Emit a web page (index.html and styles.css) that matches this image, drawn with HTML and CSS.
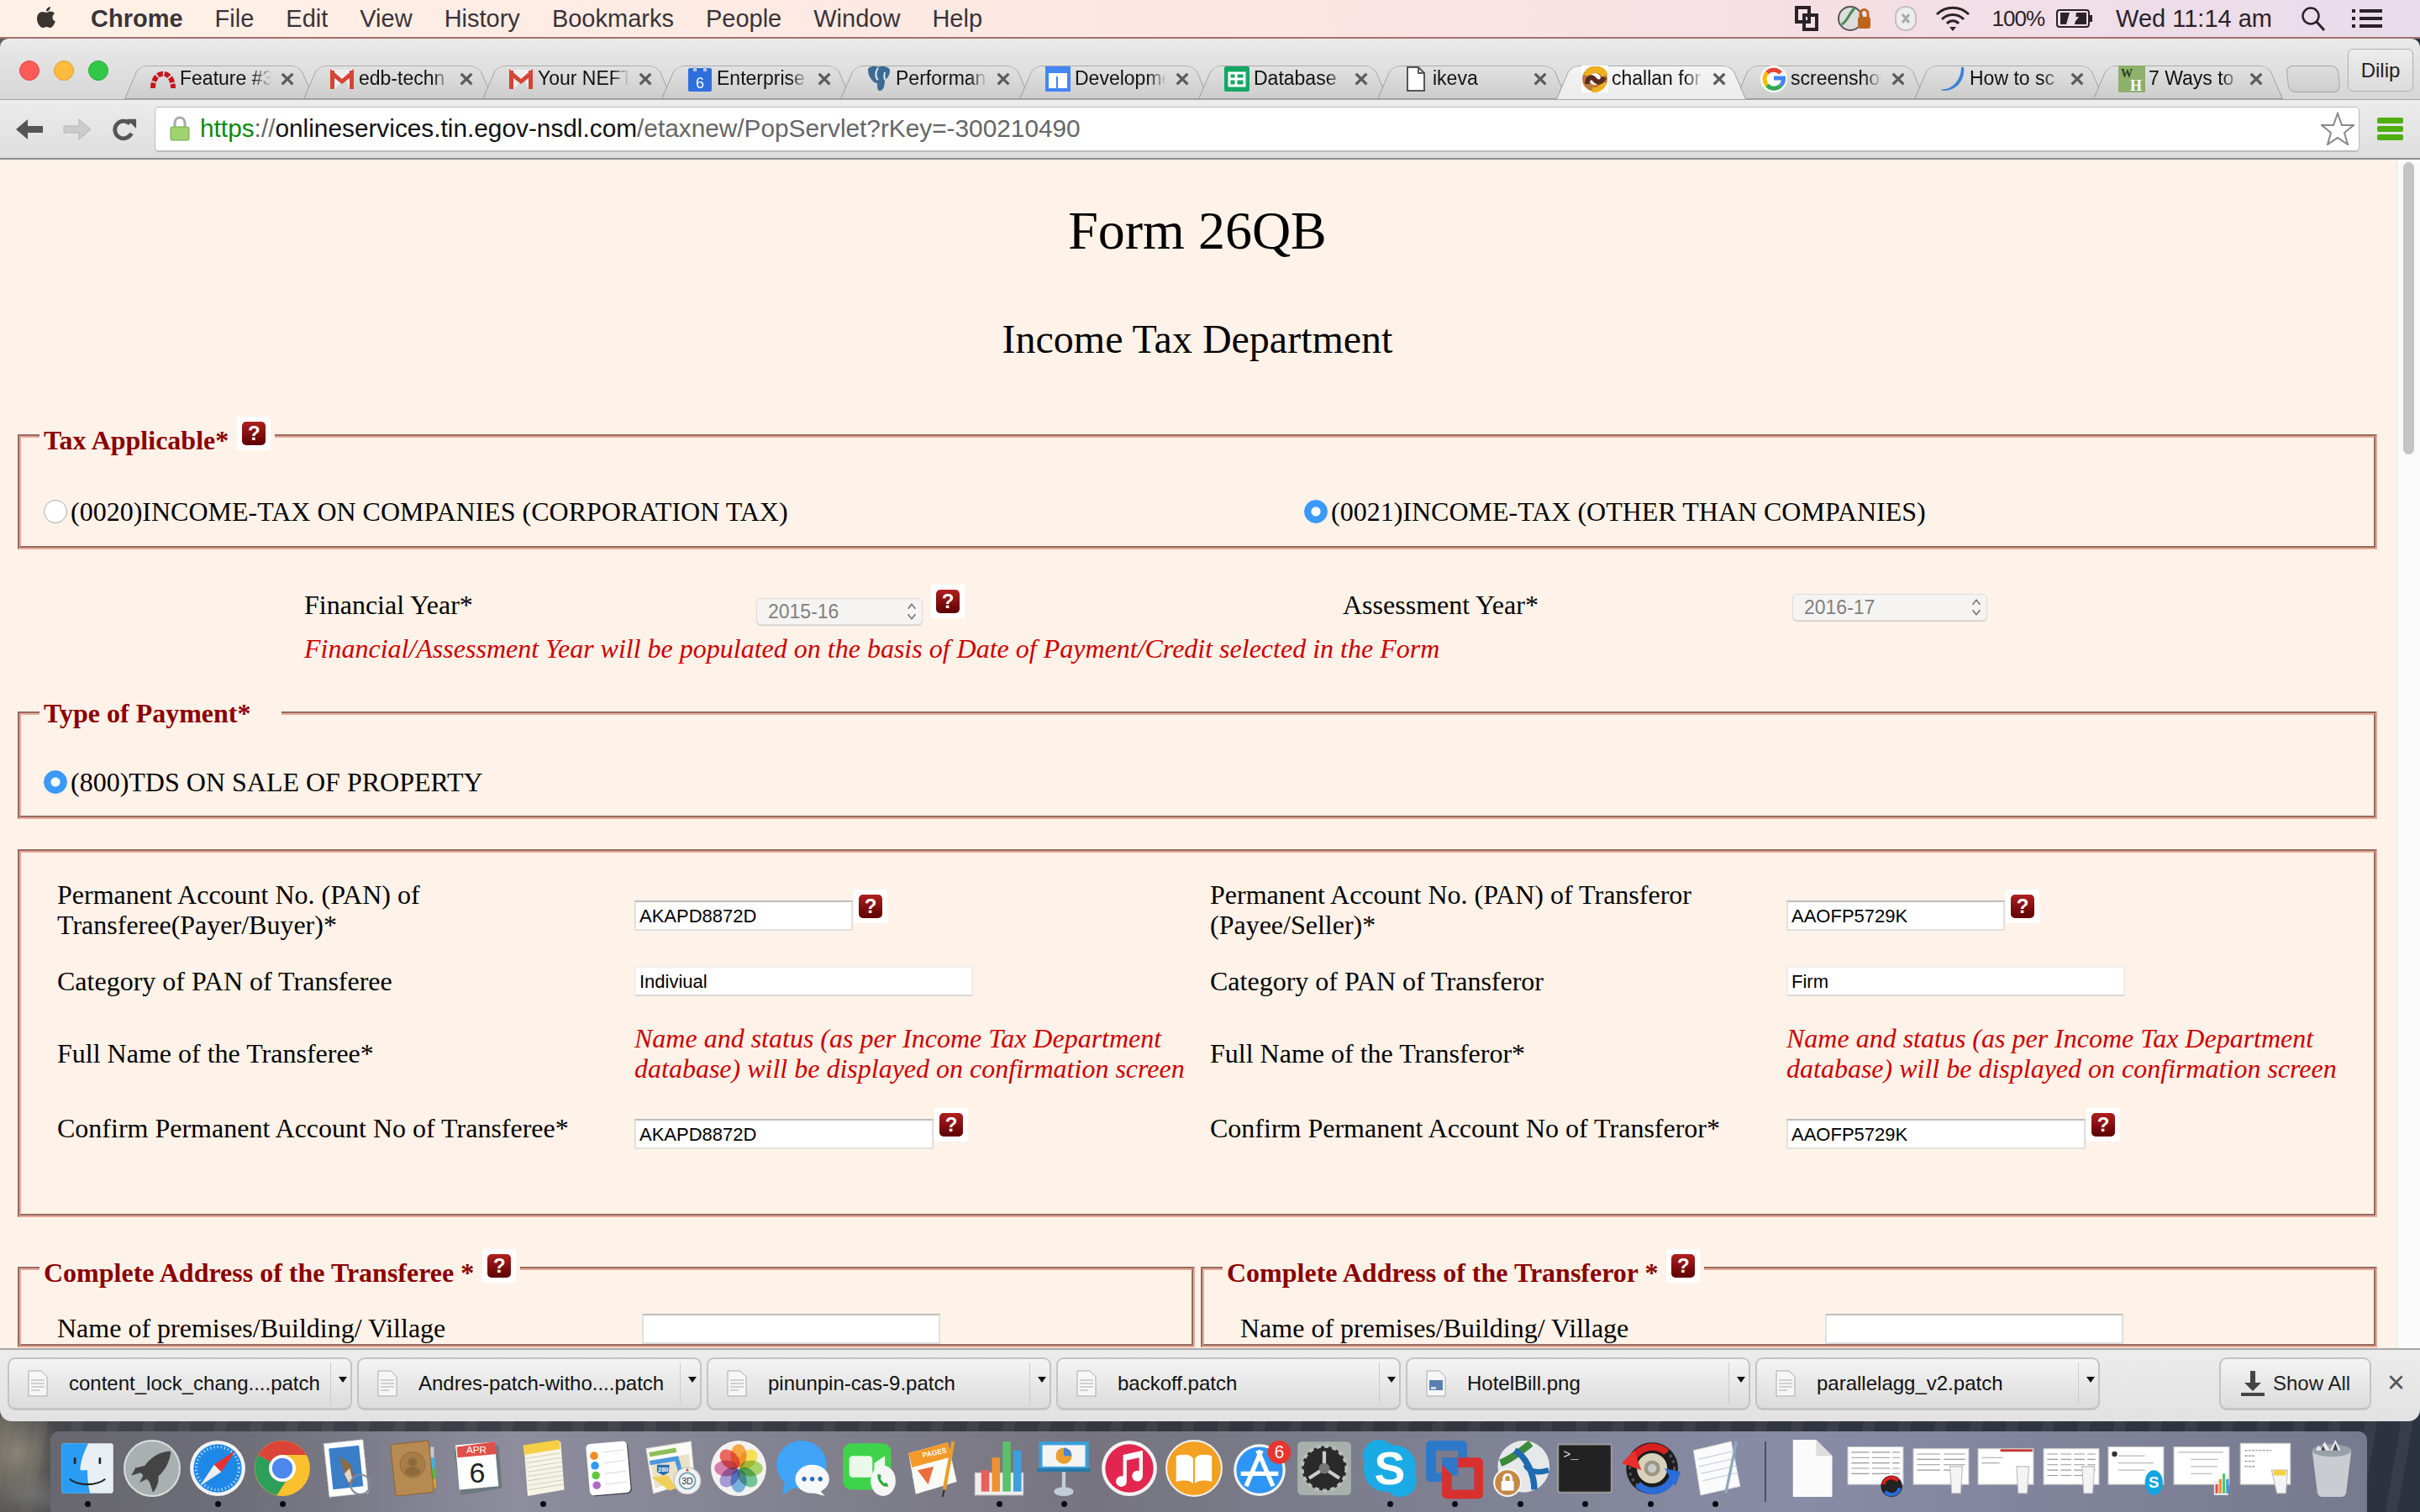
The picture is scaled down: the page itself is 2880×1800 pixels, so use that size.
FILE: index.html
```html
<!doctype html>
<html>
  <head>
    <meta charset="UTF-8" />
    <title>Form 26QB</title>
    <link rel="stylesheet" href="styles.css">
  </head>
  <body>
    <header class="menubar">
      <svg class="apple" viewBox="0 0 24 30"><path fill="#3a3330" d="M17 1c.2 3-2.600 5.600-5 5.400C11.700 3.600 14.400 1.200 17 1zM12 8c1.200 0 2.800-1.400 5-1.400 1.600 0 3.700.7 5 2.700-3.800 2.400-3.100 7.700.9 9.300-1 2.700-3.400 7.400-6 7.400-1.700 0-2.400-1.100-4.500-1.100s-2.900 1.100-4.500 1.100C4.800 26 1 20.500 1 15.300 1 10 4.300 7 7.500 7 9.500 7 10.900 8 12 8z"/></svg>
      <span class="menu-app">Chrome</span>
      <span>File</span><span>Edit</span><span>View</span><span>History</span><span>Bookmarks</span><span>People</span><span>Window</span><span>Help</span>
      <div class="menu-right">
        <svg class="m-vm" viewBox="0 0 28 30"><path fill="none" stroke="#2a2228" stroke-width="4" d="M2 2h15v17H2zM11 11h15v17H11z"/></svg>
        <svg class="m-cisco" viewBox="0 0 42 30"><circle cx="15" cy="15" r="14" fill="#ddd" stroke="#555" stroke-width="2"/><path fill="none" stroke="#4a8a50" stroke-width="3" d="M5 22C12 18 14 8 20 3"/><rect x="24" y="13" width="15" height="14" rx="3" fill="#c0641a"/><path fill="none" stroke="#c0641a" stroke-width="3" d="M27 14V9a4.500 4.500 0 0 1 9 0v5"/></svg>
        <svg class="m-skype" viewBox="0 0 30 30"><rect x="3" y="1" width="24" height="28" rx="11" fill="#eee" stroke="#c6c0c4" stroke-width="2"/><path stroke="#aaa" stroke-width="3" d="M11 10l8 10M19 10l-8 10"/></svg>
        <svg class="m-wifi" viewBox="0 0 42 30"><g fill="none" stroke="#2a2228" stroke-width="3"><path d="M2 10a27 27 0 0 1 38 0M8 16a18 18 0 0 1 26 0M14 21a9 9 0 0 1 14 0"/></g><path fill="#2a2228" d="M17 25h8l-4 5z"/></svg>
        <span class="m-pct">100%</span>
        <svg class="m-batt" viewBox="0 0 44 22"><rect x="1" y="1" width="38" height="20" rx="3" fill="none" stroke="#2a2228" stroke-width="2"/><rect x="40" y="7" width="3" height="8" fill="#2a2228"/><path fill="#2a2228" d="M5 4h11l-4 14H5zM24 4h12v14H22z"/><path fill="#e8dcea" d="M24 2l-8 11h5l-3 8 9-12h-5z"/></svg>
        <span class="m-clock">Wed 11:14 am</span>
        <svg class="m-search" viewBox="0 0 30 30"><circle cx="12" cy="12" r="9.500" fill="none" stroke="#2a2228" stroke-width="2.500"/><path stroke="#2a2228" stroke-width="3" d="M19 19l9 10"/></svg>
        <svg class="m-list" viewBox="0 0 36 24"><path stroke="#2a2228" stroke-width="4" d="M0 3h4M9 3h27M0 12h4M9 12h27M0 21h4M9 21h27"/></svg>
      </div>
    </header>

    <div class="browser">
      <div class="tabstrip">
        <div class="lights"><i class="red"></i><i class="yellow"></i><i class="green"></i></div>
        <div class="tabs">
          <div class="tab">
            <svg class="fav" viewBox="0 0 32 32"><path fill="none" stroke="#c8141c" stroke-width="6" stroke-dasharray="6.500 1.800" d="M4 27C4 4 28 4 28 27"/></svg>
            <span class="tab-title">Feature #3</span><span class="tab-x">×</span>
          </div>
          <div class="tab">
            <svg class="fav" viewBox="0 0 32 32"><path fill="#eee" d="M3 5h26v23H3z"/><path fill="#d6d6d6" d="M7 28L20 15l5 13z"/><path fill="#d64434" d="M2 6h5v22H2zM25 6h5v22h-5z"/><path fill="#d64434" d="M2 4l14 12L30 4v7L16 22 2 11z"/></svg>
            <span class="tab-title">edb-techn</span><span class="tab-x">×</span>
          </div>
          <div class="tab">
            <svg class="fav" viewBox="0 0 32 32"><path fill="#eee" d="M3 5h26v23H3z"/><path fill="#d6d6d6" d="M7 28L20 15l5 13z"/><path fill="#d64434" d="M2 6h5v22H2zM25 6h5v22h-5z"/><path fill="#d64434" d="M2 4l14 12L30 4v7L16 22 2 11z"/></svg>
            <span class="tab-title">Your NEFT</span><span class="tab-x">×</span>
          </div>
          <div class="tab">
            <svg class="fav" viewBox="0 0 32 32"><rect x="2" y="3" width="28" height="28" rx="2" fill="#2f6fdc"/><path fill="#b9c6da" d="M8 0h4v7H8zM20 0h4v7h-4z"/><text x="16" y="27" text-anchor="middle" class="fav-num">6</text></svg>
            <span class="tab-title">Enterprise</span><span class="tab-x">×</span>
          </div>
          <div class="tab">
            <svg class="fav" viewBox="0 0 32 32"><path fill="#3b6a94" d="M3 5c0-4 8-5 12-3 4-2 14-1 14 4 0 5-3 10-6 11 0 5-1 13-6 13-3 0-3-5-3-9-5 0-11-8-11-16z"/><path stroke="#dfe8f0" stroke-width="2" fill="none" d="M15 3c-4 5-3 12 0 14M23 8c-1 3-1 6 0 9"/></svg>
            <span class="tab-title">Performan</span><span class="tab-x">×</span>
          </div>
          <div class="tab">
            <svg class="fav" viewBox="0 0 32 32"><rect x="1" y="1" width="30" height="30" fill="#4285f4"/><path fill="#fff" d="M5 9h22v18H16V13h-2v14H5z"/></svg>
            <span class="tab-title">Developme</span><span class="tab-x">×</span>
          </div>
          <div class="tab">
            <svg class="fav" viewBox="0 0 32 32"><rect x="1" y="1" width="30" height="30" rx="2" fill="#16a765"/><path fill="none" stroke="#fff" stroke-width="3" d="M7 9h18v15H7zM7 16h18M15 9v15"/></svg>
            <span class="tab-title">Database</span><span class="tab-x">×</span>
          </div>
          <div class="tab">
            <svg class="fav" viewBox="0 0 32 32"><path fill="#fff" stroke="#555" stroke-width="2" d="M6 2h13l7 7v21H6z"/><path fill="none" stroke="#555" stroke-width="2" d="M19 2v7h7"/></svg>
            <span class="tab-title">ikeva</span><span class="tab-x">×</span>
          </div>
          <div class="tab tab-active">
            <svg class="fav" viewBox="0 0 32 32"><rect width="32" height="32" fill="#fff"/><circle cx="16" cy="16" r="11" fill="none" stroke="#c07a38" stroke-width="8"/><path fill="none" stroke="#eeb020" stroke-width="8" d="M6 12C10 3 24 2 28 12"/><path fill="none" stroke="#eeb020" stroke-width="6" d="M13 29c6 1 12-2 14-9"/><path fill="none" stroke="#5a2c20" stroke-width="6" d="M7 22C7 14 12 12 16 17s9 2 11-3"/></svg>
            <span class="tab-title">challan for</span><span class="tab-x">×</span>
          </div>
          <div class="tab">
            <svg class="fav" viewBox="0 0 32 32"><circle cx="16" cy="16" r="16" fill="#fff"/><path fill="none" stroke-width="5" stroke="#ea4335" d="M24 9a11 11 0 0 0-16-.500"/><path fill="none" stroke-width="5" stroke="#fbbc05" d="M8 8.500a11 11 0 0 0 0 15"/><path fill="none" stroke-width="5" stroke="#34a853" d="M8 23.500a11 11 0 0 0 16 .500"/><path fill="none" stroke-width="5" stroke="#4285f4" d="M24 24a11 11 0 0 0 3.500-9H16"/></svg>
            <span class="tab-title">screenshot</span><span class="tab-x">×</span>
          </div>
          <div class="tab">
            <svg class="fav" viewBox="0 0 32 32"><path fill="#3c82d4" d="M26 2h3c2 14-8 28-23 28 0 0-3 0-4-2 12 2 24-10 24-26z"/></svg>
            <span class="tab-title">How to sc</span><span class="tab-x">×</span>
          </div>
          <div class="tab">
            <svg class="fav" viewBox="0 0 32 32"><rect width="32" height="32" fill="#8db06a"/><text x="3" y="14" class="fav-wh wh-dark">W</text><text x="14" y="30" class="fav-wh">H</text></svg>
            <span class="tab-title">7 Ways to</span><span class="tab-x">×</span>
          </div>
        </div>
        <div class="newtab"></div>
        <div class="profile">Dilip</div>
      </div>

      <div class="toolbar">
        <svg class="tb-back" viewBox="0 0 34 28"><path fill="#555" d="M15 2L1 14l14 12v-8h18v-8H15z"/></svg>
        <svg class="tb-fwd" viewBox="0 0 34 28"><path fill="#ccc" stroke="#b4b4b4" d="M19 2l14 12-14 12v-8H1v-8h18z"/></svg>
        <svg class="tb-reload" viewBox="0 0 32 30"><path fill="none" stroke="#555" stroke-width="5" d="M25 20a11 11 0 1 1-2-12"/><path fill="#555" d="M19 2h12v12z"/></svg>
        <div class="omnibox">
          <svg class="lock" viewBox="0 0 26 30"><path fill="none" stroke="#aaa" stroke-width="3" d="M7 13V8a6 6 0 0 1 12 0v5"/><rect x="2" y="13" width="22" height="16" rx="2" fill="#9fd36f" stroke="#75a84a"/></svg>
          <div class="url"><span class="url-https">https</span><span class="url-dim">://</span>onlineservices.tin.egov-nsdl.com<span class="url-dim">/etaxnew/PopServlet?rKey=-300210490</span></div>
          <svg class="star" viewBox="0 0 40 40"><path fill="#fff" stroke="#888" stroke-width="2" d="M20 2l5 14h14l-11 9 4 14-12-8-12 8 4-14L1 16h14z"/></svg>
        </div>
        <div class="hamburger"><i></i><i></i><i></i></div>
      </div>

      <div class="viewport">
        <main class="page">
          <h1>Form 26QB</h1>
          <h2>Income Tax Department</h2>

          <fieldset class="box tax-box">
            <legend><span>Tax Applicable*</span><span class="help"><b>?</b></span></legend>
            <div class="radio-row">
              <label class="radio"><input type="radio" name="tax">(0020)INCOME-TAX ON COMPANIES (CORPORATION TAX)</label>
              <label class="radio"><input type="radio" name="tax" checked>(0021)INCOME-TAX (OTHER THAN COMPANIES)</label>
            </div>
          </fieldset>

          <div class="year-row">
            <span class="year-label">Financial Year*</span>
            <div class="year-field">
              <div class="year-select">2015-16<svg viewBox="0 0 12 20"><path fill="none" stroke="#777" stroke-width="1.500" d="M2 7l4-5 4 5M2 13l4 5 4-5"/></svg></div>
              <span class="help"><b>?</b></span>
            </div>
            <span class="year-label">Assessment Year*</span>
            <div class="year-field">
              <div class="year-select year-select-wide">2016-17<svg viewBox="0 0 12 20"><path fill="none" stroke="#777" stroke-width="1.500" d="M2 7l4-5 4 5M2 13l4 5 4-5"/></svg></div>
            </div>
          </div>
          <p class="note year-note">Financial/Assessment Year will be populated on the basis of Date of Payment/Credit selected in the Form</p>

          <fieldset class="box payment-box">
            <legend class="payment-legend"><span>Type of Payment*</span></legend>
            <div class="radio-row">
              <label class="radio"><input type="radio" name="payment" checked>(800)TDS ON SALE OF PROPERTY</label>
            </div>
          </fieldset>

          <fieldset class="box pan-box">
            <div class="pan-grid">
              <div>Permanent Account No. (PAN) of Transferee(Payer/Buyer)*</div>
              <div class="pan-field"><input class="txt txt-short" value="AKAPD8872D" readonly><span class="help"><b>?</b></span></div>
              <div class="col-right">Permanent Account No. (PAN) of Transferor (Payee/Seller)*</div>
              <div class="pan-field"><input class="txt txt-short" value="AAOFP5729K" readonly><span class="help"><b>?</b></span></div>

              <div>Category of PAN of Transferee</div>
              <div><input class="txt txt-wide" value="Indiviual" readonly></div>
              <div class="col-right">Category of PAN of Transferor</div>
              <div><input class="txt txt-wide" value="Firm" readonly></div>

              <div>Full Name of the Transferee*</div>
              <div class="note">Name and status (as per Income Tax Department database) will be displayed on confirmation screen</div>
              <div class="col-right">Full Name of the Transferor*</div>
              <div class="note">Name and status (as per Income Tax Department database) will be displayed on confirmation screen</div>

              <div>Confirm Permanent Account No of Transferee*</div>
              <div class="pan-field"><input class="txt txt-mid" value="AKAPD8872D" readonly><span class="help"><b>?</b></span></div>
              <div class="col-right">Confirm Permanent Account No of Transferor*</div>
              <div class="pan-field"><input class="txt txt-mid" value="AAOFP5729K" readonly><span class="help"><b>?</b></span></div>
            </div>
          </fieldset>

          <div class="address-row">
            <fieldset class="box address-box">
              <legend><span>Complete Address of the Transferee *</span><span class="help"><b>?</b></span></legend>
              <div class="address-line">
                <span>Name of premises/Building/ Village</span>
                <input class="txt txt-addr" readonly>
              </div>
            </fieldset>
            <fieldset class="box address-box">
              <legend><span>Complete Address of the Transferor *</span><span class="help"><b>?</b></span></legend>
              <div class="address-line">
                <span>Name of premises/Building/ Village</span>
                <input class="txt txt-addr" readonly>
              </div>
            </fieldset>
          </div>
        </main>
        <div class="scrollbar"><div class="thumb"></div></div>
      </div>

      <div class="shelf">
        <div class="dl">
          <svg class="dl-icon" viewBox="0 0 24 32"><path fill="#f6f6f6" stroke="#aaa" d="M1 1h15l7 7v23H1z"/><path stroke="#aaa" d="M4 12h16M4 16h16M4 20h16M4 24h10"/></svg>
          <span class="dl-name">content_lock_chang....patch</span><span class="dl-arrow"></span>
        </div>
        <div class="dl">
          <svg class="dl-icon" viewBox="0 0 24 32"><path fill="#f6f6f6" stroke="#aaa" d="M1 1h15l7 7v23H1z"/><path stroke="#aaa" d="M4 12h16M4 16h16M4 20h16M4 24h10"/></svg>
          <span class="dl-name">Andres-patch-witho....patch</span><span class="dl-arrow"></span>
        </div>
        <div class="dl">
          <svg class="dl-icon" viewBox="0 0 24 32"><path fill="#f6f6f6" stroke="#aaa" d="M1 1h15l7 7v23H1z"/><path stroke="#aaa" d="M4 12h16M4 16h16M4 20h16M4 24h10"/></svg>
          <span class="dl-name">pinunpin-cas-9.patch</span><span class="dl-arrow"></span>
        </div>
        <div class="dl">
          <svg class="dl-icon" viewBox="0 0 24 32"><path fill="#f6f6f6" stroke="#aaa" d="M1 1h15l7 7v23H1z"/><path stroke="#aaa" d="M4 12h16M4 16h16M4 20h16M4 24h10"/></svg>
          <span class="dl-name">backoff.patch</span><span class="dl-arrow"></span>
        </div>
        <div class="dl">
          <svg class="dl-icon" viewBox="0 0 24 32"><path fill="#f6f6f6" stroke="#aaa" d="M1 1h15l7 7v23H1z"/><rect x="4" y="12" width="16" height="12" fill="#5a7fb0"/><path fill="#ddd" d="M6 20h6v3H6z"/></svg>
          <span class="dl-name">HotelBill.png</span><span class="dl-arrow"></span>
        </div>
        <div class="dl">
          <svg class="dl-icon" viewBox="0 0 24 32"><path fill="#f6f6f6" stroke="#aaa" d="M1 1h15l7 7v23H1z"/><path stroke="#aaa" d="M4 12h16M4 16h16M4 20h16M4 24h10"/></svg>
          <span class="dl-name">parallelagg_v2.patch</span><span class="dl-arrow"></span>
        </div>
        <div class="showall">
          <svg viewBox="0 0 28 30"><path fill="#444" d="M11 0h6v14h7L14 24 4 14h7zM0 26h28v4H0z"/></svg>Show All
        </div>
        <span class="shelf-x">×</span>
      </div>
    </div>

    <nav class="dock">
      <div class="dock-app running"><svg viewBox="0 0 64 64"><rect x="3" y="4" width="58" height="56" rx="3" fill="#e8f0f6"/><path fill="#2a9cf4" d="M6 4h27c-6 12-9 22-9 30h8c0 9 1 18 3 26H6a3 3 0 0 1-3-3V7a3 3 0 0 1 3-3z"/><path fill="none" stroke="#222" stroke-width="2" d="M12 44c10 8 30 8 40 0"/><path stroke="#222" stroke-width="2.500" d="M18 20v7M46 20v7"/></svg></div>
      <div class="dock-app"><svg viewBox="0 0 64 64"><circle cx="32" cy="32" r="31" fill="#a9b0b0" stroke="#d8dcdc" stroke-width="2"/><path fill="#444" d="M50 13C40 14 30 20 24 29l-12 3c3-1-3 6-3 8l10-3 3 3-4 8 8-4 3 3 4 12c3-3 7-11 6-18 8-7 13-17 14-28z"/></svg></div>
      <div class="dock-app running"><svg viewBox="0 0 64 64"><circle cx="32" cy="32" r="31" fill="#f4f4f4"/><circle cx="32" cy="32" r="27" fill="#1e88e8"/><circle cx="32" cy="32" r="24" fill="none" stroke="#d8ecff" stroke-width="3" stroke-dasharray="1 3"/><path fill="#e8302c" d="M52 12L36 36l-8-8z"/><path fill="#eee" d="M12 52l16-24 8 8z"/></svg></div>
      <div class="dock-app running"><svg viewBox="0 0 64 64"><circle cx="32" cy="32" r="31" fill="#fbc02d"/><path fill="#2e9e5b" d="M32 32L5 17A31 31 0 0 0 26 62L40 40z"/><path fill="#db4437" d="M32 32L5 17A31 31 0 0 1 59 17H32z"/><circle cx="32" cy="32" r="15" fill="#fff"/><circle cx="32" cy="32" r="11.500" fill="#4d86ec"/></svg></div>
      <div class="dock-app"><svg viewBox="0 0 64 64"><rect x="8" y="2" width="44" height="60" fill="#fff" stroke="#ccc" stroke-dasharray="3 2" transform="rotate(-6 30 32)"/><rect x="13" y="8" width="34" height="46" fill="#3a7ec8" transform="rotate(-6 30 32)"/><path fill="#8a6a48" d="M22 18l14 10 3 18-6 4-6-16z"/><path fill="#e4d8c0" d="M28 38l6-6 3 12-4 4z"/><circle cx="46" cy="50" r="11" fill="none" stroke="#889" stroke-width="2"/></svg></div>
      <div class="dock-app"><svg viewBox="0 0 64 64"><path fill="#c6c8cc" d="M52 8h4v12h-4z"/><path fill="#40b4dc" d="M52 20h5v12h-5z"/><path fill="#55b84e" d="M53 32h5v12h-5z"/><path fill="#e2a22a" d="M54 44h4v10h-4z"/><rect x="10" y="3" width="43" height="58" rx="3" fill="#b68a52" stroke="#8c6636" transform="rotate(-6 32 32)"/><circle cx="32" cy="28" r="14" fill="#a87c46" stroke="#96703e"/><circle cx="32" cy="25" r="5" fill="#8e6a3a"/><path fill="#8e6a3a" d="M23 37c1-9 17-9 18 0a14 14 0 0 1-18 0z"/></svg></div>
      <div class="dock-app"><svg viewBox="0 0 64 64"><path fill="#6c7a80" d="M5 12l50-6 4 48-46 8z"/><rect x="9" y="4" width="44" height="50" fill="#fff" transform="rotate(-5 32 32)"/><path fill="#e0504a" d="M8 8l43-6 2 14-44 4z"/><text x="30" y="15" class="cal-mon" text-anchor="middle">APR</text><text x="31" y="48" class="cal-day" text-anchor="middle">6</text></svg></div>
      <div class="dock-app running"><svg viewBox="0 0 64 64"><path fill="#f6f4e4" d="M11 9l41-7 4 54-41 7z"/><path fill="#f6d044" d="M10 6L50 0l2 10-41 7z"/><path stroke="#d2d0c0" d="M13 21l38-6M14 26l38-6M14 31l39-6M15 36l38-6M15 41l39-6M15 46l39-6M16 51l39-6M16 56l39-6"/></svg></div>
      <div class="dock-app"><svg viewBox="0 0 64 64"><rect x="9" y="3" width="46" height="58" rx="5" fill="#333" transform="rotate(-5 32 32) translate(1 1)"/><rect x="9" y="3" width="46" height="58" rx="5" fill="#fff" transform="rotate(-5 32 32)"/><circle cx="16" cy="18" r="4.500" fill="#f08a24"/><circle cx="17" cy="29" r="4.500" fill="#2f9cf0"/><circle cx="18" cy="40" r="4.500" fill="#5cc83c"/><circle cx="19" cy="51" r="4.500" fill="#b46ac4"/><path stroke="#ddd" d="M26 14l24-3M27 26l24-3M28 38l24-3M29 50l24-3"/></svg></div>
      <div class="dock-app"><svg viewBox="0 0 64 64"><path fill="#fbfaf4" stroke="#ddd" d="M2 10l50-8 4 44-46 14z"/><path fill="#e8e2c8" d="M6 24l44-8 2 26-40 12z"/><path fill="#8cbe5a" d="M5 14l30-5 1 5-30 5z"/><path fill="none" stroke="#4a98e0" stroke-width="5" d="M6 26l30-5 4 14"/><path fill="#f0cf58" d="M8 42l18-2 10 14-8 3z"/><path fill="#2f6db0" d="M14 28h14l-1 9-6 3-7-4z"/><text x="21" y="36" class="map-280" text-anchor="middle">280</text><circle cx="48" cy="46" r="15" fill="#f0f2f2" stroke="#bbb"/><circle cx="48" cy="46" r="9" fill="none" stroke="#6a9ab0" stroke-width="1.500"/><path fill="#d03030" d="M48 32l2 3h-4z"/><text x="48" y="50" class="map-3d" text-anchor="middle">3D</text></svg></div>
      <div class="dock-app"><svg viewBox="0 0 64 64"><circle cx="32" cy="32" r="31" fill="#f4f2f0"/><g class="petals"><ellipse cx="32" cy="18" rx="9" ry="13" fill="#f59a23"/><ellipse cx="32" cy="18" rx="9" ry="13" fill="#f4dc3f" transform="rotate(45 32 32)"/><ellipse cx="32" cy="18" rx="9" ry="13" fill="#9ccc55" transform="rotate(90 32 32)"/><ellipse cx="32" cy="18" rx="9" ry="13" fill="#5cba8a" transform="rotate(135 32 32)"/><ellipse cx="32" cy="18" rx="9" ry="13" fill="#64a5dc" transform="rotate(180 32 32)"/><ellipse cx="32" cy="18" rx="9" ry="13" fill="#9a8bd0" transform="rotate(225 32 32)"/><ellipse cx="32" cy="18" rx="9" ry="13" fill="#d06aa0" transform="rotate(270 32 32)"/><ellipse cx="32" cy="18" rx="9" ry="13" fill="#e8504a" transform="rotate(315 32 32)"/></g></svg></div>
      <div class="dock-app"><svg viewBox="0 0 64 64"><ellipse cx="30" cy="28" rx="28" ry="27" fill="#3fa4f8"/><path fill="#3fa4f8" d="M12 46L8 62l16-10z"/><ellipse cx="42" cy="44" rx="19" ry="16" fill="#f6f8fc"/><path fill="#f6f8fc" d="M50 56l6 7-14-4z"/><circle cx="33" cy="44" r="2.500" fill="#2b6cb0"/><circle cx="42" cy="44" r="2.500" fill="#2b6cb0"/><circle cx="51" cy="44" r="2.500" fill="#2b6cb0"/></svg></div>
      <div class="dock-app"><svg viewBox="0 0 64 64"><rect x="3" y="4" width="54" height="52" rx="10" fill="#3fd34c"/><rect x="10" y="18" width="26" height="24" rx="4" fill="#eaf8ea"/><path fill="#eaf8ea" d="M38 26l12-8v24l-12-8z"/><ellipse cx="48" cy="46" rx="14" ry="17" fill="#f6f6f6"/><path fill="#2da83a" d="M42 38l4 2-1 4 4 5 3-1 2 4c-6 3-14-7-12-14z"/></svg></div>
      <div class="dock-app"><svg viewBox="0 0 64 64"><path fill="#fbfbf6" d="M4 15L48 3l10 44-46 14z"/><path fill="#f49a2a" d="M4 15L48 3l4 16-44 12z"/><text x="20" y="20" class="pages-t" transform="rotate(-12 20 20)">PAGES</text><path fill="#e76e3c" d="M14 34l18-4-6 20z"/><path stroke="#e8a030" stroke-width="4" d="M54 2L44 56"/><path stroke="#333" stroke-width="2" d="M44 56l-2 8"/></svg></div>
      <div class="dock-app running"><svg viewBox="0 0 64 64"><rect x="5" y="37" width="54" height="25" fill="#eee" stroke="#ccc"/><rect x="12" y="34" width="9" height="24" fill="#e8605a"/><rect x="24" y="20" width="9" height="38" fill="#f09030"/><rect x="36" y="2" width="9" height="56" fill="#5cc06a"/><rect x="48" y="12" width="9" height="46" fill="#3e9ee0"/></svg></div>
      <div class="dock-app running"><svg viewBox="0 0 64 64"><rect x="4" y="2" width="56" height="30" fill="#3aa0dc"/><rect x="8" y="6" width="48" height="24" fill="#f4f4f4"/><circle cx="32" cy="18" r="9" fill="#e8a030"/><path fill="#4a86d0" d="M32 18V9a9 9 0 0 1 9 9z"/><rect x="2" y="32" width="60" height="4" fill="#2878a8"/><rect x="30" y="36" width="4" height="20" fill="#c4ced6"/><ellipse cx="32" cy="58" rx="11" ry="5" fill="#c0ccd6"/></svg></div>
      <div class="dock-app"><svg viewBox="0 0 64 64"><circle cx="32" cy="32" r="31" fill="#f4f4f4"/><circle cx="32" cy="32" r="27" fill="#e2264f"/><path fill="#fff" d="M25 17l22-5v29a6 6 0 1 1-4-6V20l-14 3v24a6 6 0 1 1-4-6z"/></svg></div>
      <div class="dock-app"><svg viewBox="0 0 64 64"><circle cx="32" cy="32" r="31" fill="#f4a020"/><circle cx="32" cy="32" r="31" fill="none" stroke="#f0f0f0" stroke-width="2"/><path fill="#fff" d="M12 18c8-2 16-2 19 3v28c-4-4-11-4-19-2zM52 18c-8-2-16-2-19 3v28c4-4 11-4 19-2z"/></svg></div>
      <div class="dock-app"><svg viewBox="0 0 64 64"><circle cx="32" cy="34" r="29" fill="#f4f4f4"/><circle cx="32" cy="34" r="26" fill="#2f95f5"/><path fill="none" stroke="#fff" stroke-width="5" d="M34 12L17 52M30 12l17 40M11 38h42"/><circle cx="54" cy="14" r="13" fill="#e8352e"/><text x="54" y="21" class="badge-num" text-anchor="middle">6</text></svg></div>
      <div class="dock-app"><svg viewBox="0 0 64 64"><rect x="2" y="2" width="60" height="60" rx="5" fill="#a8b0ac"/><circle cx="32" cy="32" r="25" fill="#2a2a2a"/><circle cx="32" cy="32" r="25" fill="none" stroke="#bbb" stroke-width="4" stroke-dasharray="5 4"/><path fill="none" stroke="#ccc" stroke-width="4" d="M32 32V13M32 32L15 43M32 32l17 11"/><circle cx="32" cy="32" r="6" fill="#777"/></svg></div>
      <div class="dock-app running"><svg viewBox="0 0 64 64"><circle cx="20" cy="18" r="18" fill="#1aabe6"/><circle cx="44" cy="46" r="18" fill="#1aabe6"/><rect x="3" y="6" width="58" height="52" rx="24" fill="#1aabe6"/><text x="32" y="50" class="skype-s" text-anchor="middle">S</text></svg></div>
      <div class="dock-app running"><svg viewBox="0 0 64 64"><rect x="0" y="1" width="46" height="46" rx="5" fill="#2d78c8"/><rect x="11" y="12" width="25" height="25" fill="#7b7c8e"/><rect x="18" y="20" width="46" height="46" rx="5" fill="#d8302e"/><rect x="29" y="31" width="25" height="25" fill="#7b7c8e"/><path fill="#2d78c8" d="M18 20h18v18h-2zM18 20l20 20H30L18 28z"/><path fill="#7b7c8e" d="M36 37v3h-3z"/></svg></div>
      <div class="dock-app running"><svg viewBox="0 0 64 64"><circle cx="36" cy="30" r="29" fill="#e6e8ea"/><path fill="none" stroke="#3c8a3c" stroke-width="8" d="M10 26C22 22 34 12 44 4"/><path fill="none" stroke="#1f6ab0" stroke-width="7" d="M26 12c12 6 22 26 22 44"/><path fill="none" stroke="#1f6ab0" stroke-width="6" d="M38 28c4 8 14 10 26 6"/><circle cx="18" cy="48" r="15" fill="#c48a44" stroke="#f4f4f4" stroke-width="2"/><rect x="11" y="46" width="14" height="11" rx="1" fill="#fff"/><path fill="none" stroke="#fff" stroke-width="3" d="M14 47v-4a4 4 0 0 1 8 0v4"/></svg></div>
      <div class="dock-app running"><svg viewBox="0 0 64 64"><rect x="2" y="5" width="60" height="54" rx="2" fill="#222" stroke="#999" stroke-width="2"/><text x="8" y="21" class="term-t">&gt;_</text></svg></div>
      <div class="dock-app running"><svg viewBox="0 0 64 64"><circle cx="34" cy="32" r="29" fill="#1c1c1c"/><circle cx="34" cy="32" r="25" fill="none" stroke="#555" stroke-width="3" stroke-dasharray="3 4"/><circle cx="34" cy="32" r="17" fill="#d8d2ba"/><circle cx="34" cy="32" r="9" fill="#9c9684"/><circle cx="34" cy="32" r="5" fill="#c8c8c8"/><path fill="none" stroke="#d8201e" stroke-width="8" d="M11 26A24 24 0 0 1 50 14"/><path fill="#e8302c" d="M0 26l14-14 8 22z"/><path fill="none" stroke="#2a6cd8" stroke-width="8" d="M58 40A24 24 0 0 1 18 50"/><path fill="#2a6cd8" d="M66 36L48 32l12 20z"/></svg></div>
      <div class="dock-app running"><svg viewBox="0 0 64 64"><path fill="#fbfbfb" stroke="#ddd" d="M8 12L50 2l10 50-44 10z"/><path stroke="#c4d0e0" d="M13 22l39-9M14 30l40-9M16 38l40-9M18 46l40-9"/><path stroke="#8ea8bc" stroke-width="3" d="M56 2L44 60"/></svg></div>
      <div class="dock-sep"></div>
      <div class="dock-app"><svg viewBox="0 0 64 64"><path fill="#fbfbfb" d="M12 0h26l18 18v46H12z"/><path fill="#ddd" d="M38 0l18 18H38z"/></svg></div>
      <div class="dock-app"><svg viewBox="0 0 64 64"><rect x="1" y="8" width="62" height="42" fill="#fff" stroke="#ccc"/><path stroke="#999" stroke-dasharray="20 3" d="M5 14h54M5 20h54M5 26h54M5 32h54M5 38h54"/><circle cx="50" cy="52" r="12" fill="#222"/><path fill="none" stroke="#d8201e" stroke-width="4" d="M41 50a9 9 0 0 1 16-4"/><path fill="none" stroke="#2a6cd8" stroke-width="4" d="M59 54a9 9 0 0 1-16 4"/></svg></div>
      <div class="dock-app"><svg viewBox="0 0 64 64"><rect x="1" y="10" width="62" height="40" fill="#fff" stroke="#ccc"/><path stroke="#999" stroke-dasharray="26 4" d="M5 16h54M5 22h54M5 28h54M5 34h40"/><path fill="#f4f4f4" stroke="#bbb" d="M42 30h14l-2 30H44z"/></svg></div>
      <div class="dock-app"><svg viewBox="0 0 64 64"><rect x="1" y="10" width="62" height="40" fill="#fff" stroke="#ccc"/><path stroke="#c63a3a" stroke-width="3" d="M26 12h36"/><path stroke="#aaa" d="M5 20h24M5 26h20"/><path fill="#f4f4f4" stroke="#bbb" d="M44 30h14l-2 30H46z"/></svg></div>
      <div class="dock-app"><svg viewBox="0 0 64 64"><rect x="1" y="10" width="62" height="40" fill="#fff" stroke="#ccc"/><path stroke="#999" stroke-dasharray="12 3" d="M5 16h54M5 22h54M5 28h54M5 34h54M5 40h40"/><path fill="#f4f4f4" stroke="#bbb" d="M44 30h14l-2 30H46z"/></svg></div>
      <div class="dock-app"><svg viewBox="0 0 64 64"><rect x="1" y="8" width="62" height="42" fill="#fff" stroke="#ccc"/><path stroke="#bbb" d="M12 18h30M12 26h40M12 34h30"/><circle cx="8" cy="16" r="3" fill="#333"/><ellipse cx="52" cy="48" rx="10" ry="14" fill="#12a5e0"/><text x="52" y="54" class="skype-mini" text-anchor="middle">S</text></svg></div>
      <div class="dock-app"><svg viewBox="0 0 64 64"><rect x="1" y="8" width="62" height="42" fill="#fff" stroke="#ccc"/><path stroke="#bbb" d="M6 14h50M20 22h30M20 30h30M20 38h24"/><rect x="46" y="46" width="16" height="16" fill="#eee"/><path stroke-width="3" stroke="#e0504a" d="M49 60V50"/><path stroke-width="3" stroke="#f09030" d="M53 60V44"/><path stroke-width="3" stroke="#5cc06a" d="M57 60V38"/><path stroke-width="3" stroke="#3e9ee0" d="M61 60V44"/></svg></div>
      <div class="dock-app"><svg viewBox="0 0 64 64"><rect x="3" y="4" width="56" height="46" fill="#fff" stroke="#ccc"/><path stroke="#888" stroke-dasharray="3 1" d="M8 12h30M8 18h12M8 24h12M8 30h12"/><path fill="#f4f4f4" stroke="#bbb" d="M38 34h18l-2 26H44z"/><path fill="#f6d044" d="M40 34h14v6H40z"/></svg></div>
      <div class="dock-app"><svg viewBox="0 0 64 64"><path fill="#d8dade" opacity=".85" d="M10 12h44l-6 48a6 6 0 0 1-6 4H22a6 6 0 0 1-6-4z"/><ellipse cx="32" cy="12" rx="22" ry="7" fill="#9aa0a8"/><path fill="#e8e8e8" d="M18 12l6-10 6 10zM30 12l6-12 6 12zM14 12l3-6 4 6z"/><path fill="#445" d="M22 6l3 6h-5zM36 4l3 8h-6z"/></svg></div>
    </nav>
  </body>
</html>
```

FILE: styles.css
```css
* {
  box-sizing: border-box;
}
html,
body {
  margin: 0;
  width: 2880px;
  height: 1800px;
  overflow: hidden;
}
body {
  display: flex;
  flex-direction: column;
  font-family: "Liberation Sans", Arial, sans-serif;
  background-color: #34353c;
  background-image:
    radial-gradient(ellipse 50px 60px at 20px 1730px, #8a8578, transparent),
    radial-gradient(ellipse 60px 30px at 40px 1780px, #6e6e6e, transparent),
    repeating-linear-gradient(100deg, rgba(255, 255, 255, 0.05) 0 14px, transparent 14px 42px),
    linear-gradient(90deg, #5a5750 0, #42434a 3%, #35363d 50%, #2c3340 100%);
}

/* mac menu bar */
.menubar {
  display: flex;
  align-items: center;
  height: 46px;
  flex: none;
  gap: 38px;
  padding-left: 43px;
  font-size: 29px;
  color: #3a3338;
  background: linear-gradient(90deg, #fff1e6 0, #fde6e2 50%, #f6dfe4 75%, #e8dcec 100%);
  border-bottom: 2px solid #a4706c;
}
.apple {
  width: 24px;
  height: 30px;
  margin-right: 3px;
}
.menu-app {
  font-weight: bold;
}
.menu-right {
  display: flex;
  align-items: center;
  margin-left: auto;
  padding-right: 45px;
  color: #2a2228;
}
.m-vm {
  width: 28px;
  height: 30px;
}
.m-cisco {
  width: 42px;
  height: 30px;
  margin-left: 23px;
}
.m-skype {
  width: 30px;
  height: 30px;
  margin-left: 24px;
}
.m-wifi {
  width: 42px;
  height: 30px;
  margin-left: 20px;
}
.m-pct {
  margin-left: 26px;
  font-size: 26px;
  letter-spacing: -1px;
}
.m-batt {
  width: 44px;
  height: 22px;
  margin-left: 14px;
}
.m-clock {
  margin-left: 27px;
}
.m-search {
  width: 30px;
  height: 30px;
  margin-left: 34px;
}
.m-list {
  width: 36px;
  height: 24px;
  margin-left: 31px;
}

/* browser window */
.browser {
  display: flex;
  flex-direction: column;
  flex: none;
  height: 1646px;
  border-radius: 10px 10px 14px 14px;
  overflow: hidden;
}
.tabstrip {
  display: flex;
  align-items: flex-end;
  height: 72px;
  flex: none;
  background: linear-gradient(#eaeaea, #d6d6d6);
}
.lights {
  display: flex;
  align-self: center;
  gap: 17px;
  margin: 4px 0 0 23px;
}
.lights i {
  width: 24px;
  height: 24px;
  border-radius: 50%;
}
.lights .red {
  background: #fc5b57;
  border: 1px solid #e14640;
}
.lights .yellow {
  background: #fdbc40;
  border: 1px solid #e09e2c;
}
.lights .green {
  background: #33c748;
  border: 1px solid #2aa73a;
}
.tabs {
  display: flex;
  margin-left: 19px;
}
.tab {
  position: relative;
  display: flex;
  align-items: center;
  width: 226px;
  height: 49px;
  margin-right: -13px;
  padding: 0 0 0 30px;
  font-size: 23px;
  color: #111;
  isolation: isolate;
}
.tab::before {
  content: "";
  position: absolute;
  inset: 0;
  z-index: -1;
  background: linear-gradient(#e2e2e2, #cdcdcd);
  border: 1px solid #9a9a9a;
  border-radius: 12px 12px 0 0;
  transform: perspective(80px) rotateX(17deg);
  transform-origin: bottom;
}
.tab-active {
  z-index: 2;
}
.tab-active::before {
  background: linear-gradient(#f4f4f4, #ececec);
  border-bottom-color: #ececec;
}
.fav {
  width: 32px;
  height: 32px;
  flex: none;
  margin-right: 4px;
}
.fav-num {
  font-size: 18px;
  fill: #fff;
}
.fav-wh {
  font-family: "Liberation Serif", serif;
  font-weight: bold;
  font-size: 18px;
  fill: #fff;
}
.fav-wh.wh-dark {
  fill: #2f3d22;
  font-size: 14px;
}
.tab-title {
  width: 109px;
  flex: none;
  white-space: nowrap;
  overflow: hidden;
  -webkit-mask-image: linear-gradient(90deg, #000 80%, transparent);
  mask-image: linear-gradient(90deg, #000 80%, transparent);
}
.tab-x {
  width: 24px;
  margin-left: 7px;
  text-align: center;
  font-size: 30px;
  font-weight: bold;
  line-height: 1;
  color: #5c5c5c;
}
.newtab {
  width: 62px;
  height: 32px;
  margin: 0 0 8px 18px;
  flex: none;
  background: linear-gradient(#dedede, #cfcfcf);
  border: 1px solid #a6a6a6;
  border-radius: 8px;
  transform: skewX(6deg);
}
.profile {
  width: 78px;
  height: 51px;
  margin: 0 0 9px 10px;
  flex: none;
  text-align: center;
  line-height: 49px;
  font-size: 24px;
  color: #222;
  background: linear-gradient(#ececec, #dcdcdc);
  border: 1px solid #b0b0b0;
  border-radius: 6px;
}
.toolbar {
  display: flex;
  align-items: center;
  height: 72px;
  flex: none;
  padding-left: 18px;
  background: linear-gradient(#ececec, #dedede);
  border-top: 1px solid #a4a4a4;
  border-bottom: 2px solid #8c8c8c;
}
.tb-back,
.tb-fwd {
  width: 34px;
  height: 28px;
}
.tb-fwd {
  margin-left: 23px;
}
.tb-reload {
  width: 30px;
  height: 30px;
  margin-left: 24px;
}
.omnibox {
  display: flex;
  align-items: center;
  width: 2624px;
  height: 54px;
  margin-left: 21px;
  padding: 0 5px 0 16px;
  background: #fff;
  border: 1px solid #bcbcbc;
  border-bottom-width: 2px;
  border-radius: 5px;
}
.lock {
  width: 26px;
  height: 30px;
}
.url {
  margin-left: 11px;
  font-size: 29.8px;
  color: #111;
  white-space: nowrap;
}
.url-https {
  color: #0a8a0a;
}
.url-dim {
  color: #666;
}
.star {
  width: 40px;
  height: 40px;
  margin-left: auto;
}
.hamburger {
  display: flex;
  flex-direction: column;
  gap: 3px;
  margin-left: 21px;
}
.hamburger i {
  width: 31px;
  height: 7px;
  border-radius: 2px;
  background: #4fae10;
}

/* page */
.viewport {
  display: flex;
  flex: 1;
  min-height: 0;
  background: #fff2e8;
}
.page {
  flex: 1;
  min-width: 0;
  padding: 48px 23px 0 21px;
  font-family: "Liberation Serif", "Times New Roman", serif;
  font-size: 32px;
  color: #000;
  overflow: hidden;
}
h1 {
  margin: 0 0 64px;
  text-align: center;
  font-size: 64px;
  font-weight: normal;
  line-height: 74px;
}
h2 {
  margin: 0 0 65px;
  text-align: center;
  font-size: 48px;
  font-weight: normal;
  line-height: 55px;
}
.box {
  margin: 0;
  min-width: 0;
  padding: 0;
  border: 4px groove #e8a898;
}
legend {
  display: flex;
  align-items: center;
  height: 46px;
  margin-left: 22px;
  padding: 0 5px;
  font-weight: bold;
  color: #8b0000;
}
legend span:first-child {
  margin-top: 11px;
}
legend .help {
  margin: -6px 0 0 10px;
}
.help {
  display: inline-flex;
  align-items: center;
  justify-content: center;
  flex: none;
  width: 40px;
  height: 40px;
  background: #fff;
}
.help b {
  width: 28px;
  height: 28px;
  border-radius: 5px;
  background: linear-gradient(#b02020, #5c0000);
  font: bold 24px/28px "Liberation Sans", sans-serif;
  text-align: center;
  color: #fff;
}
.radio-row {
  display: grid;
  grid-template-columns: 1500px 1fr;
  height: 44px;
  margin: 45px 0 19px;
  padding-left: 27px;
  align-items: center;
}
.radio {
  display: flex;
  align-items: center;
}
.radio input {
  appearance: none;
  width: 28px;
  height: 28px;
  margin: 0 4px 0 0;
  flex: none;
  background: #fff;
  border: 1px solid #a8a8a8;
  border-radius: 50%;
}
.radio input:checked {
  background: radial-gradient(circle, #fff 0 5px, #3b99fc 6px);
  border-color: #3b99fc;
}
.year-row {
  display: grid;
  grid-template-columns: 538px 698px 535px 1fr;
  margin: 42px 0 0 341px;
  line-height: 40px;
}
.year-label {
  margin-top: 4px;
}
.year-field {
  display: flex;
  align-items: flex-start;
}
.year-select {
  position: relative;
  display: flex;
  align-items: center;
  width: 198px;
  height: 32px;
  margin-top: 16px;
  padding-left: 13px;
  font: 23px "Liberation Sans", sans-serif;
  color: #808080;
  background: #f6f4f2;
  border: 1px solid #ddd;
  border-radius: 6px;
  box-shadow: 0 1px 1px #ccc;
}
.year-select-wide {
  width: 232px;
  margin-top: 11px;
}
.year-select svg {
  position: absolute;
  right: 5px;
  top: 4px;
  width: 14px;
  height: 22px;
}
.year-field .help {
  margin-left: 10px;
}
.note {
  font-style: italic;
  color: #cc0000;
  line-height: 36px;
}
.year-note {
  margin: 10px 0 36px 341px;
}
.payment-legend {
  padding-right: 37px;
}
.payment-legend span:first-child {
  margin-top: 0;
}
.payment-box .radio-row {
  margin: 37px 0 18px;
}
.pan-box {
  margin-top: 36px;
  padding: 32px 0 50px 43px;
}
.pan-grid {
  display: grid;
  grid-template-columns: 687px 685px 686px 1fr;
  grid-template-rows: 72px 98px 74px 104px;
  align-items: center;
  line-height: 36px;
}
.col-right {
  width: 640px;
}
.pan-grid > div:nth-child(4n + 1) {
  width: 640px;
}
.pan-field {
  display: flex;
  align-items: flex-start;
}
.txt {
  display: block;
  height: 36px;
  padding: 2px 4px 0;
  font: 22px "Liberation Sans", sans-serif;
  color: #000;
  background: #fff;
  border: 2px solid #e0e0e0;
  border-top-color: #bdbdbd;
  outline: none;
}
.pan-field .txt {
  margin-top: 13px;
}
.txt-short {
  width: 260px;
}
.txt-mid {
  width: 356px;
}
.txt-wide {
  width: 403px;
  border-color: #eeeeee;
  border-bottom-color: #d8d8d8;
}
.txt-addr {
  width: 355px;
}
.pan-field .help {
  margin-left: 1px;
}
.address-row {
  display: grid;
  grid-template-columns: 1401px 1fr;
  gap: 7px;
  margin-top: 38px;
}
.address-line {
  display: grid;
  grid-template-columns: 696px 1fr;
  align-items: center;
  padding: 30px 0 0 43px;
}
.scrollbar {
  width: 28px;
  flex: none;
  padding: 3px 7px;
  background: #fafafa;
  border-left: 1px solid #e4e4e4;
}
.thumb {
  height: 348px;
  border-radius: 7px;
  background: #c4c4c4;
}

/* downloads shelf */
.shelf {
  display: flex;
  align-items: flex-start;
  gap: 6px;
  height: 87px;
  flex: none;
  padding: 9px 0 0 9px;
  background: linear-gradient(#ececec, #e2e2e2);
  border-top: 2px solid #a8a8a8;
}
.dl {
  display: flex;
  align-items: center;
  width: 410px;
  height: 63px;
  padding-left: 22px;
  font-size: 24px;
  color: #111;
  background: linear-gradient(#f4f4f4, #dcdcdc);
  border: 2px solid #c4c4c4;
  border-bottom-width: 3px;
  border-radius: 9px;
}
.dl-icon {
  width: 24px;
  height: 32px;
  flex: none;
}
.dl-name {
  width: 336px;
  flex: none;
  padding-left: 25px;
  white-space: nowrap;
}
.dl-arrow {
  position: relative;
  flex: 1;
  height: 50px;
  border-left: 1px solid #cccccc;
}
.dl-arrow::after {
  content: "";
  position: absolute;
  top: 17px;
  left: 9px;
  border: 5px solid transparent;
  border-top: 7px solid #111;
}
.showall {
  display: flex;
  align-items: center;
  gap: 10px;
  width: 181px;
  height: 63px;
  margin-left: 136px;
  padding-left: 24px;
  font-size: 24px;
  color: #222;
  background: linear-gradient(#f4f4f4, #dcdcdc);
  border: 2px solid #c4c4c4;
  border-bottom-width: 3px;
  border-radius: 9px;
}
.showall svg {
  width: 28px;
  height: 30px;
  flex: none;
}
.shelf-x {
  margin-left: 13px;
  font-size: 36px;
  line-height: 60px;
  color: #555;
}

/* dock */
.dock {
  display: flex;
  align-items: flex-start;
  width: 2757px;
  height: 96px;
  margin: 12px 0 0 60px;
  padding: 10px 0 0 5px;
  border-radius: 10px 10px 0 0;
  background: linear-gradient(90deg, #68676f 0, #6e6e78 8%, #8d8d9e 20%, #76757f 45%, #7e8092 60%, #888ca6 75%, #777a8e 100%);
}
.dock-app {
  position: relative;
  width: 77.5px;
  height: 68px;
  flex: none;
  display: flex;
  justify-content: center;
}
.dock-app svg {
  width: 68px;
  height: 68px;
  overflow: visible;
}
.dock-app.running::after {
  content: "";
  position: absolute;
  left: 50%;
  bottom: -12px;
  width: 7px;
  height: 7px;
  margin-left: -3px;
  border-radius: 50%;
  background: #0a0a12;
}
.dock-sep {
  width: 2px;
  height: 72px;
  flex: none;
  margin: 2px 14px 0 20px;
  background: #4e5064;
}
.petals {
  opacity: 0.85;
}
.petals ellipse {
  mix-blend-mode: multiply;
}
.cal-mon {
  font-size: 11px;
  fill: #fff;
}
.cal-day {
  font-size: 32px;
  fill: #222;
}
.map-3d {
  font-size: 10px;
  fill: #333;
}
.map-280 {
  font-size: 7px;
  font-weight: bold;
  fill: #fff;
}
.pages-t {
  font-size: 8px;
  font-weight: bold;
  fill: #fff;
}
.badge-num {
  font-size: 20px;
  fill: #fff;
}
.skype-s {
  font-size: 52px;
  font-weight: bold;
  fill: #fff;
}
.skype-mini {
  font-size: 18px;
  font-weight: bold;
  fill: #fff;
}
.term-t {
  font-family: "Liberation Mono", monospace;
  font-size: 14px;
  fill: #eee;
}
```
